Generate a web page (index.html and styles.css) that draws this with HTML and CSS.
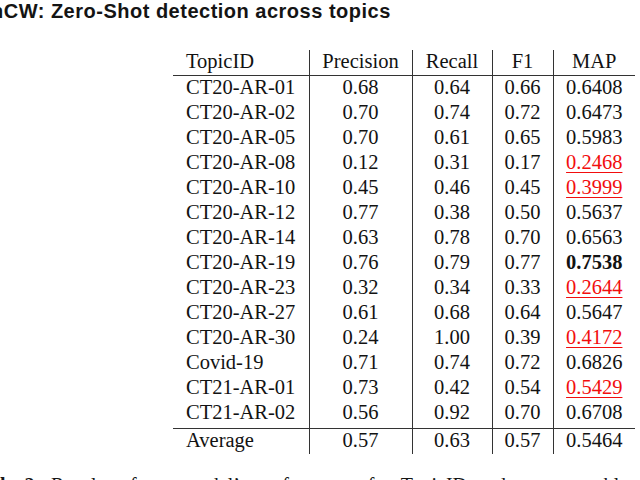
FILE: index.html
```html
<!DOCTYPE html>
<html>
<head>
<meta charset="utf-8">
<link rel="stylesheet" href="styles.css">
</head>
<body>
<div class="page">
  <h1 class="title">nCW: Zero-Shot detection across topics</h1>
  <table class="results">
    <colgroup>
      <col class="c-id"><col class="c-p"><col class="c-r"><col class="c-f"><col class="c-m">
    </colgroup>
    <thead>
      <tr><th class="id">TopicID</th><th>Precision</th><th>Recall</th><th>F1</th><th>MAP</th></tr>
    </thead>
    <tbody>
      <tr><td class="id">CT20-AR-01</td><td>0.68</td><td>0.64</td><td>0.66</td><td>0.6408</td></tr>
      <tr><td class="id">CT20-AR-02</td><td>0.70</td><td>0.74</td><td>0.72</td><td>0.6473</td></tr>
      <tr><td class="id">CT20-AR-05</td><td>0.70</td><td>0.61</td><td>0.65</td><td>0.5983</td></tr>
      <tr><td class="id">CT20-AR-08</td><td>0.12</td><td>0.31</td><td>0.17</td><td><span class="low">0.2468</span></td></tr>
      <tr><td class="id">CT20-AR-10</td><td>0.45</td><td>0.46</td><td>0.45</td><td><span class="low">0.3999</span></td></tr>
      <tr><td class="id">CT20-AR-12</td><td>0.77</td><td>0.38</td><td>0.50</td><td>0.5637</td></tr>
      <tr><td class="id">CT20-AR-14</td><td>0.63</td><td>0.78</td><td>0.70</td><td>0.6563</td></tr>
      <tr><td class="id">CT20-AR-19</td><td>0.76</td><td>0.79</td><td>0.77</td><td><b class="best">0.7538</b></td></tr>
      <tr><td class="id">CT20-AR-23</td><td>0.32</td><td>0.34</td><td>0.33</td><td><span class="low">0.2644</span></td></tr>
      <tr><td class="id">CT20-AR-27</td><td>0.61</td><td>0.68</td><td>0.64</td><td>0.5647</td></tr>
      <tr><td class="id">CT20-AR-30</td><td>0.24</td><td>1.00</td><td>0.39</td><td><span class="low">0.4172</span></td></tr>
      <tr><td class="id">Covid-19</td><td>0.71</td><td>0.74</td><td>0.72</td><td>0.6826</td></tr>
      <tr><td class="id">CT21-AR-01</td><td>0.73</td><td>0.42</td><td>0.54</td><td><span class="low">0.5429</span></td></tr>
      <tr class="last"><td class="id">CT21-AR-02</td><td>0.56</td><td>0.92</td><td>0.70</td><td>0.6708</td></tr>
    </tbody>
    <tfoot>
      <tr><td class="id">Average</td><td>0.57</td><td>0.63</td><td>0.57</td><td>0.5464</td></tr>
    </tfoot>
  </table>
  <p class="caption"><b>le 2:</b> Results of our model’s performance for TopicID and our ensemble across the d</p>
</div>
</body>
</html>
```

FILE: styles.css
```css
html, body {
  margin: 0;
  padding: 0;
  background: #ffffff;
  overflow: hidden;
}

.page {
  width: 640px;
  height: 480px;
  overflow: hidden;
  color: #111;
}

.title {
  margin: 0 0 0 -9px;
  font-family: "Liberation Sans", Arial, sans-serif;
  font-weight: bold;
  font-size: 20px;
  letter-spacing: 0.5px;
  line-height: 23px;
  white-space: nowrap;
  color: #141414;
}

.results {
  margin: 27px 0 0 173px;
  border-collapse: collapse;
  table-layout: fixed;
  width: 462px;
  font-family: "Liberation Serif", "Times New Roman", serif;
  font-size: 20.5px;
  color: #121212;
}

.c-id { width: 136px; }
.c-p { width: 103px; }
.c-r { width: 80px; }
.c-f { width: 61px; }
.c-m { width: 82px; }

.results th,
.results td {
  font-weight: normal;
  line-height: 22px;
  height: 22px;
  padding: 0 0 3px 0;
  text-align: center;
  white-space: nowrap;
  border-left: 1px solid #333;
}

.results th.id,
.results td.id {
  text-align: left;
  padding-left: 13px;
  border-left: none;
}

.results thead th {
  border-bottom: 1px solid #333;
}

.results tr.last td {
  padding-bottom: 5px;
  border-bottom: 1px solid #333;
}

.low {
  color: #f20d0d;
  text-decoration: underline;
  text-decoration-thickness: 1px;
  text-underline-offset: 3px;
}

.best {
  font-weight: bold;
}

.caption {
  margin: 19px 0 0 0;
  font-family: "Liberation Serif", "Times New Roman", serif;
  font-size: 20px;
  line-height: 24px;
  white-space: nowrap;
  color: #151515;
  word-spacing: 5px;
}
```
